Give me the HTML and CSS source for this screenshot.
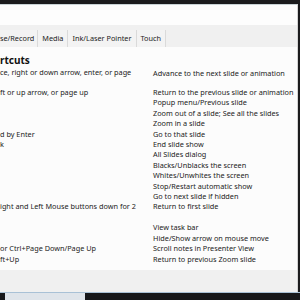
FILE: index.html
```html
<!DOCTYPE html>
<html lang="en">
  <head>
    <meta charset="UTF-8" />
    <title>Slide Show Help</title>
    <link rel="stylesheet" href="styles.css">
  </head>
  <body>
    <div class="window">
      <div class="caption"></div>

      <div class="tabs">
        <div class="tab first">se/Record</div>
        <div class="tab">Media</div>
        <div class="tab">Ink/Laser Pointer</div>
        <div class="tab">Touch</div>
      </div>

      <div class="content">
        <h2>rtcuts</h2>
        <div class="keys">
          <div class="key tall">ce, right or down arrow, enter, or page<br>&nbsp;</div>
          <div class="desc">Advance to the next slide or animation</div>

          <div class="key">ft or up arrow, or page up</div>
          <div class="desc">Return to the previous slide or animation</div>

          <div class="key"></div>
          <div class="desc">Popup menu/Previous slide</div>

          <div class="key"></div>
          <div class="desc">Zoom out of a slide; See all the slides</div>

          <div class="key"></div>
          <div class="desc">Zoom in a slide</div>

          <div class="key">d by Enter</div>
          <div class="desc">Go to that slide</div>

          <div class="key">k</div>
          <div class="desc">End slide show</div>

          <div class="key"></div>
          <div class="desc">All Slides dialog</div>

          <div class="key"></div>
          <div class="desc">Blacks/Unblacks the screen</div>

          <div class="key"></div>
          <div class="desc">Whites/Unwhites the screen</div>

          <div class="key"></div>
          <div class="desc">Stop/Restart automatic show</div>

          <div class="key"></div>
          <div class="desc">Go to next slide if hidden</div>

          <div class="key">ight and Left Mouse buttons down for 2<br>&nbsp;</div>
          <div class="desc">Return to first slide</div>

          <div class="key"></div>
          <div class="desc">View task bar</div>

          <div class="key"></div>
          <div class="desc">Hide/Show arrow on mouse move</div>

          <div class="key">or Ctrl+Page Down/Page Up</div>
          <div class="desc">Scroll notes in Presenter View</div>

          <div class="key">ft+Up</div>
          <div class="desc">Return to previous Zoom slide</div>
        </div>
      </div>

      <div class="footer"></div>
    </div>

    <div class="taskbar">
      <div class="task"></div>
    </div>
  </body>
</html>
```

FILE: styles.css
```css
* {
  margin: 0;
  padding: 0;
  box-sizing: border-box;
}

body {
  width: 300px;
  height: 300px;
  overflow: hidden;
  background-color: #1b1b1d;
  font-family: "Noto Sans", sans-serif;
  color: #222;
}

.window {
  margin-top: 4px;
  width: 298px;
  height: 288px;
  border-top: 1px solid #c9d3d6;
  border-right: 1px solid #d4d4d4;
  background: #fbfbfb;
  display: flex;
  flex-direction: column;
}

.caption {
  height: 20px;
  background: #fdfdfd;
}

/* Barra de abas */
.tabs {
  height: 22px;
  background: #f0f0f0;
  display: flex;
  align-items: flex-end;
}

.tab {
  height: 17px;
  line-height: 17px;
  font-size: 7.3px;
  padding: 0 4px;
  border-right: 1px solid #dadada;
  background: #f3f3f3;
}

.tab.first {
  padding-left: 0;
  padding-right: 3px;
}

.content {
  flex: 1;
  padding-top: 5px;
  background: #fcfcfc;
}

h2 {
  font-size: 10px;
  line-height: 16px;
  font-weight: bold;
  color: #111;
}

.keys {
  display: grid;
  grid-template-columns: 153px 1fr;
  font-size: 7.3px;
  line-height: 10.4px;
  white-space: nowrap;
}

.key {
  overflow: hidden;
}

.key.tall {
  line-height: 9.5px;
}

.footer {
  height: 22px;
  background: #f0f0f0;
}

.taskbar {
  height: 8px;
  border-top: 1px solid #a9c1d6;
  background: #17181b;
  padding-left: 5px;
}

.task {
  width: 80px;
  height: 7px;
  background: #dfe4ea;
}
```
